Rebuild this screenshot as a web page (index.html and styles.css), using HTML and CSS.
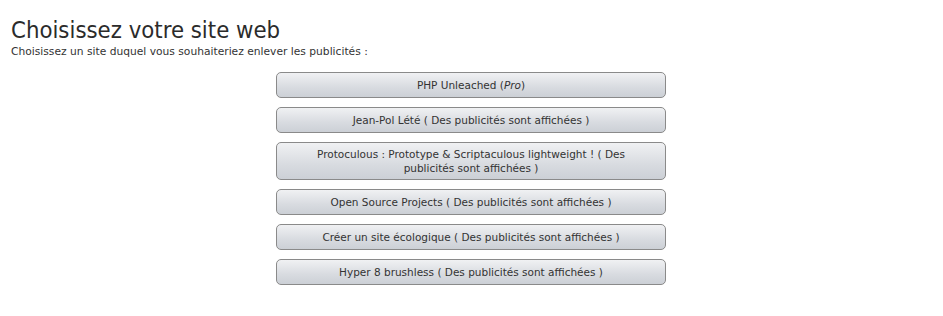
FILE: index.html
```html
<!DOCTYPE html>
<html lang="fr">
<head>
<meta charset="utf-8">
<title>Choisissez votre site web</title>
<link rel="stylesheet" href="styles.css">
</head>
<body>
<div class="page">
  <h1 class="title">Choisissez votre site web</h1>
  <p class="subtitle">Choisissez un site duquel vous souhaiteriez enlever les publicités :</p>
  <div class="sites">
    <button class="site">PHP Unleached (<em>Pro</em>)</button>
    <button class="site">Jean-Pol Lété ( Des publicités sont affichées )</button>
    <button class="site">Protoculous : Prototype &amp; Scriptaculous lightweight ! ( Des publicités sont affichées )</button>
    <button class="site">Open Source Projects ( Des publicités sont affichées )</button>
    <button class="site">Créer un site écologique ( Des publicités sont affichées )</button>
    <button class="site">Hyper 8 brushless ( Des publicités sont affichées )</button>
  </div>
</div>
</body>
</html>
```

FILE: styles.css
```css
html, body {
  margin: 0;
  padding: 0;
  background: #fff;
}
.page {
  padding: 16px 12px 0 11px;
  font-family: "DejaVu Sans", Tahoma, sans-serif;
  color: #333;
}
.title {
  margin: 0;
  font-family: "DejaVu Sans Condensed", "DejaVu Sans", Tahoma, sans-serif;
  font-size: 23.7px;
  font-weight: normal;
  line-height: 28px;
  color: #2b2b2b;
}
.subtitle {
  margin: 1px 0 0 0;
  font-size: 10.7px;
  line-height: 14px;
  color: #333;
}
.sites {
  display: flex;
  flex-direction: column;
  align-items: center;
  gap: 9px;
  margin-top: 13px;
}
.site {
  width: 390px;
  min-height: 26px;
  padding: 4px 20px;
  border: 1px solid #8a8a8a;
  border-radius: 5px;
  background: linear-gradient(to bottom, #f0f1f3 0%, #d8dbe0 60%, #ccd0d6 100%);
  font-family: "DejaVu Sans", Tahoma, sans-serif;
  font-size: 10.5px;
  line-height: 14px;
  color: #333;
  text-align: center;
  cursor: pointer;
}
.site em {
  font-style: italic;
}
```
